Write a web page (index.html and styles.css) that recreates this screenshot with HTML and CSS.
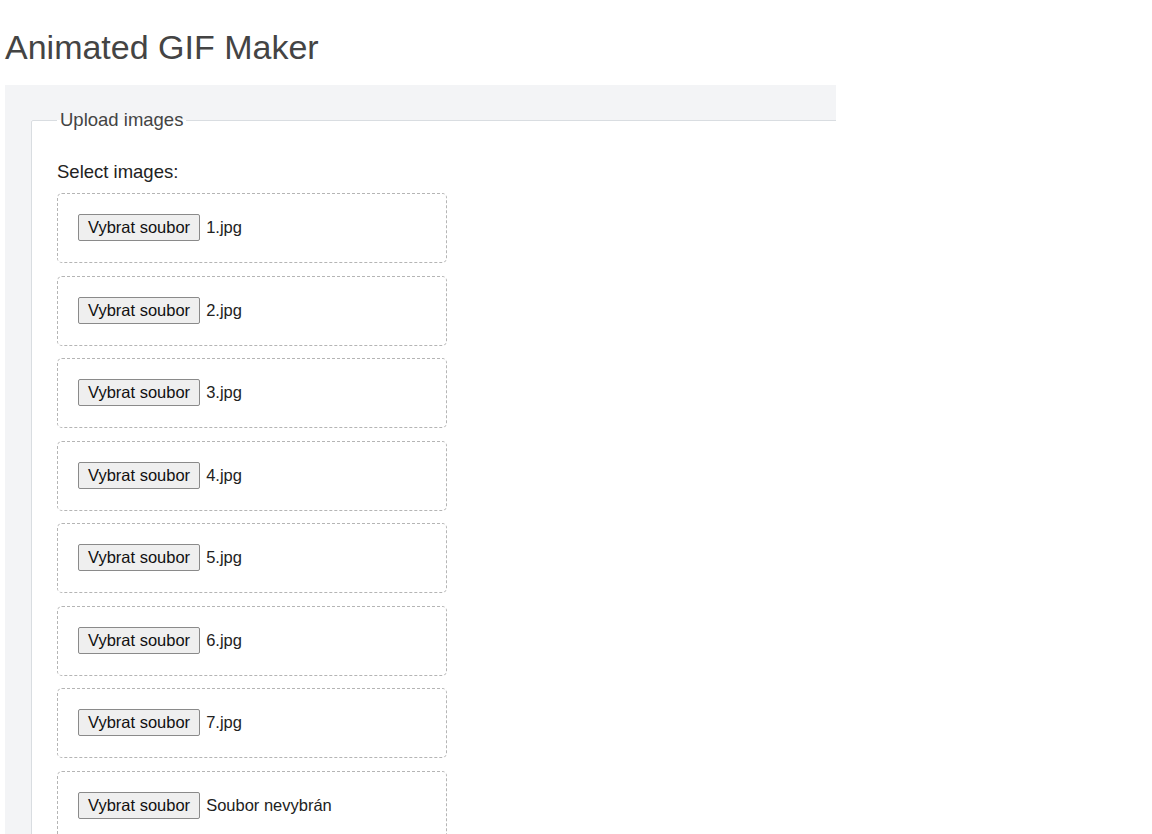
FILE: index.html
```html
<!DOCTYPE html>
<html lang="cs">

<head>
  <meta charset="UTF-8">
  <meta name="viewport" content="width=device-width, initial-scale=1.0">
  <title>Animated GIF Maker</title>

  <link rel="stylesheet" href="styles.css">
</head>

<body>
  <h1>Animated GIF Maker</h1>
  <div class="panel">
    <fieldset class="upload">
      <legend>Upload images</legend>
      <label class="select-label">Select images:</label>
      <div class="file-box"><button type="button" class="pick">Vybrat soubor</button><span class="file-name">1.jpg</span></div>
      <div class="file-box"><button type="button" class="pick">Vybrat soubor</button><span class="file-name">2.jpg</span></div>
      <div class="file-box"><button type="button" class="pick">Vybrat soubor</button><span class="file-name">3.jpg</span></div>
      <div class="file-box"><button type="button" class="pick">Vybrat soubor</button><span class="file-name">4.jpg</span></div>
      <div class="file-box"><button type="button" class="pick">Vybrat soubor</button><span class="file-name">5.jpg</span></div>
      <div class="file-box"><button type="button" class="pick">Vybrat soubor</button><span class="file-name">6.jpg</span></div>
      <div class="file-box"><button type="button" class="pick">Vybrat soubor</button><span class="file-name">7.jpg</span></div>
      <div class="file-box"><button type="button" class="pick">Vybrat soubor</button><span class="file-name">Soubor nevybrán</span></div>
    </fieldset>
  </div>
</body>

</html>
```

FILE: styles.css
```css
body {
  margin: 0;
  padding: 0 5px;
  font-family: "Liberation Sans", Arial, sans-serif;
  color: #222;
}

h1 {
  margin: 28px 0 18px 0;
  font-size: 34px;
  font-weight: normal;
  color: #444;
}

.panel {
  width: 831px;
  padding: 24px 0 0 26px;
  box-sizing: border-box;
  background-color: #f3f4f6;
  overflow: hidden;
}

.upload {
  margin: 0 -40px 0 0;
  padding: 30px 25px 0 25px;
  border: 1px solid #d9dde1;
  border-radius: 2px;
  background-color: #fff;
}

.upload legend {
  margin-left: 0;
  padding: 0 3px;
  font-size: 18.5px;
  color: #444;
}

.select-label {
  display: block;
  margin-bottom: 10px;
  font-size: 18.5px;
  color: #222;
}

.file-box {
  display: flex;
  align-items: center;
  width: 390px;
  box-sizing: border-box;
  margin-bottom: 12.5px;
  padding: 20px 20px 21px 20px;
  border: 1px dashed #b5b5b5;
  border-radius: 5px;
}

.pick {
  height: 27px;
  padding: 0 9px;
  border: 1px solid #8a8a8a;
  border-radius: 2px;
  background-color: #efefef;
  font-family: inherit;
  font-size: 16.5px;
  color: #111;
}

.file-name {
  margin-left: 6px;
  font-size: 16.5px;
  color: #222;
}
```
